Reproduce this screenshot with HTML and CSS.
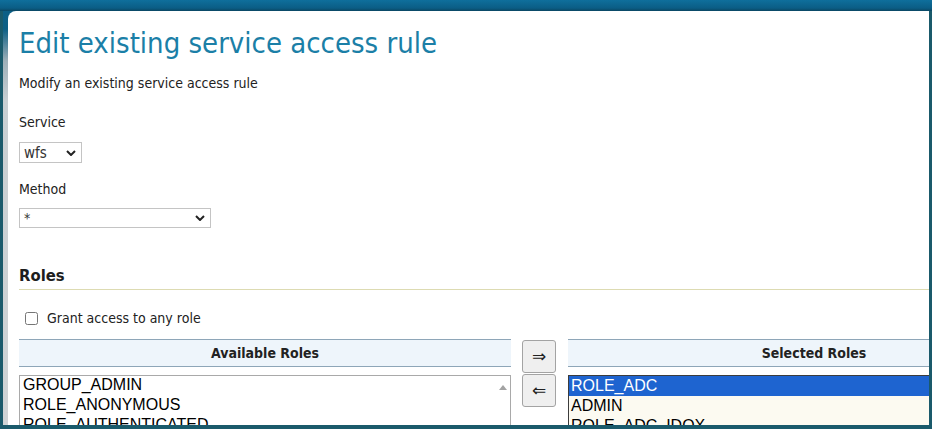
FILE: index.html
```html
<!DOCTYPE html>
<html lang="en">
  <head>
    <meta charset="UTF-8" />
    <title>Edit existing service access rule</title>
    <link rel="stylesheet" href="styles.css">
  </head>
  <body>
<div class="window">
  <div class="titlebar"></div>
  <div class="pane">
    <div class="page">

      <h1 class="title">Edit existing service access rule</h1>
      <p class="lead">Modify an existing service access rule</p>

      <div class="field">
        <div class="label">Service</div>
        <div class="select select-service">
          <span>wfs</span>
          <svg class="chevron" width="10" height="6" viewBox="0 0 10 6"><path d="M1 1 L5 5 L9 1" /></svg>
        </div>
      </div>

      <div class="field">
        <div class="label">Method</div>
        <div class="select select-method">
          <span>*</span>
          <svg class="chevron" width="10" height="6" viewBox="0 0 10 6"><path d="M1 1 L5 5 L9 1" /></svg>
        </div>
      </div>

      <h2 class="section">Roles</h2>

      <label class="check">
        <input type="checkbox" />
        <span>Grant access to any role</span>
      </label>

      <div class="palette">
        <div class="palette-head">Available Roles</div>
        <div class="palette-buttons">
          <button class="move">&rArr;</button>
          <button class="move">&lArr;</button>
        </div>
        <div class="palette-head">Selected Roles</div>

        <div class="listbox available">
          <div class="option">GROUP_ADMIN</div>
          <div class="option">ROLE_ANONYMOUS</div>
          <div class="option">ROLE_AUTHENTICATED</div>
          <div class="option">ROLE_ADMINISTRATOR</div>
          <span class="scroll-up"></span>
        </div>
        <div class="listbox selected">
          <div class="option is-selected">ROLE_ADC</div>
          <div class="option">ADMIN</div>
          <div class="option">ROLE_ADC_IDOX</div>
          <div class="option">ROLE_EDITOR</div>
        </div>
      </div>

    </div>
  </div>
</div>
  </body>
</html>
```

FILE: styles.css
```css
html, body {
  margin: 0;
  padding: 0;
}

body {
  width: 932px;
  height: 429px;
  overflow: hidden;
  font-family: "DejaVu Sans Condensed", "DejaVu Sans", sans-serif;
  font-stretch: condensed;
  font-size: 14px;
  color: #222;
}

.window {
  height: 429px;
  display: flex;
  flex-direction: column;
  background: #1a5a6b;
}

.titlebar {
  height: 11px;
  flex: none;
  background: linear-gradient(to bottom, #0f6f9c, #0b5d85 8px, #0a4763 11px);
}

.pane {
  flex: 1;
  min-height: 0;
  margin: 0 3px 4px 3px;
  padding-left: 5px;
  background: linear-gradient(to bottom, #0c5f86 0, #0d5f84 18px, #9fb0b8 50px, #c9cfd2 90px, #cfd3d5 100%);
  display: flex;
}

.page {
  flex: 1;
  min-width: 0;
  background: #fff;
  border-top-left-radius: 8px;
  padding-left: 11px;
  overflow: hidden;
}

.title {
  margin: 14px 0 0;
  font-size: 29px;
  line-height: 36px;
  font-weight: normal;
  color: #1b7fa7;
}

.lead {
  margin: 13px 0 0;
  line-height: 18px;
}

.field {
  margin-top: 21px;
}

.field + .field {
  margin-top: 17px;
}

.label {
  line-height: 18px;
  margin-bottom: 11px;
}

.field + .field .label {
  margin-bottom: 10px;
}

.select {
  box-sizing: border-box;
  display: flex;
  align-items: center;
  justify-content: space-between;
  border: 1px solid #c4c4c4;
  padding: 0 4px 0 4px;
  background: #fff;
  color: #333;
}

.select-service {
  width: 63px;
  height: 21px;
  font-size: 15px;
}

.select-method {
  width: 192px;
  height: 20px;
  align-items: flex-start;
  line-height: 18px;
}

.select-method .chevron {
  margin-top: 6px;
}

.chevron {
  flex: none;
  margin-right: 1px;
}

.chevron path {
  fill: none;
  stroke: #222;
  stroke-width: 2;
}

.section {
  margin: 38px 0 0;
  padding-bottom: 3px;
  border-bottom: 1px solid #dddbb2;
  font-size: 16.5px;
  line-height: 20px;
  color: #1d1d1d;
}

.check {
  display: flex;
  align-items: center;
  gap: 9px;
  margin: 20px 0 0 6px;
  height: 16px;
}

.check input {
  margin: 0;
  width: 13px;
  height: 13px;
}

.palette {
  display: grid;
  grid-template-columns: 492px 57px 492px;
  grid-template-rows: 28px auto;
  margin-top: 13px;
}

.palette-head {
  box-sizing: border-box;
  height: 28px;
  background: #eef5fb;
  border-top: 1px solid #8ea6b8;
  border-bottom: 1px solid #8ea6b8;
  text-align: center;
  font-weight: bold;
  font-size: 14px;
  line-height: 26px;
  color: #222;
}

.palette-buttons {
  grid-row: 1 / 3;
  grid-column: 2;
  display: flex;
  flex-direction: column;
  gap: 1px;
  padding: 1px 0 0 11px;
}

.move {
  box-sizing: border-box;
  width: 34px;
  height: 33px;
  padding: 0;
  border: 1px solid #a3a3a3;
  border-radius: 3px;
  background: #efefef;
  color: #222;
  font-family: "DejaVu Sans", sans-serif;
  font-size: 17px;
  line-height: 1;
}

.listbox {
  position: relative;
  box-sizing: border-box;
  height: 160px;
  margin-top: 8px;
  font-family: "Liberation Sans", Arial, sans-serif;
  font-stretch: normal;
  font-size: 16px;
  color: #000;
}

.available {
  grid-column: 1;
  border: 1px solid #a9a9a9;
  background: #fff;
  padding-right: 16px;
}

.selected {
  grid-column: 3;
  border: 1px solid #3c3c3c;
  background: #fcfaf1;
}

.option {
  line-height: 19px;
  padding: 0 3px 1px 3px;
  white-space: nowrap;
}

.available .option:first-child {
  margin-top: -1px;
}

.selected .option {
  padding-left: 2px;
}

.option.is-selected {
  background: #1e64d0;
  color: #fff;
}

/* scrollbar arrow of the available list */
.scroll-up {
  position: absolute;
  top: 9px;
  right: 3px;
  width: 0;
  height: 0;
  border-left: 4px solid transparent;
  border-right: 4px solid transparent;
  border-bottom: 5px solid #a3a3a3;
}
```
